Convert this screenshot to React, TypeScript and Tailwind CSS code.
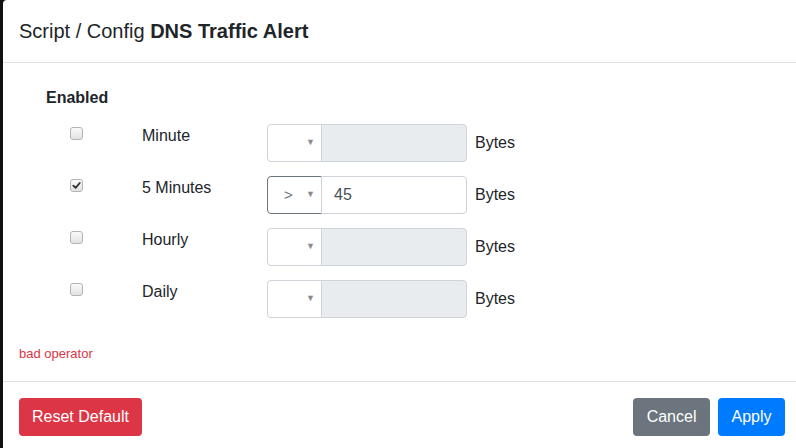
import React from 'react'

type Row = {
  label: string
  checked: boolean
  op: string
  value: string
}

const rows: Row[] = [
  { label: 'Minute', checked: false, op: '', value: '' },
  { label: '5 Minutes', checked: true, op: '>', value: '45' },
  { label: 'Hourly', checked: false, op: '', value: '' },
  { label: 'Daily', checked: false, op: '', value: '' },
]

function Checkbox({ checked }: { checked: boolean }) {
  return (
    <span className="mt-[3px] flex h-[13px] w-[13px] items-center justify-center rounded-[3px] border border-[#b4b4b4] bg-gradient-to-b from-[#fafafa] to-[#e2e2e2]">
      {checked && (
        <svg width="9" height="9" viewBox="0 0 10 10">
          <path d="M1.5 5.2 L4 7.7 L8.6 2.2" fill="none" stroke="#333" strokeWidth="2" strokeLinecap="round" strokeLinejoin="round" />
        </svg>
      )}
    </span>
  )
}

function AlertRow({ row }: { row: Row }) {
  const active = row.checked
  return (
    <div className="flex h-[38px] items-start pl-[27px]">
      <div className="w-[96px] pl-[24px]">
        <Checkbox checked={row.checked} />
      </div>
      <div className="w-[125px] text-[16px] leading-[24px] text-[#212529]">{row.label}</div>
      <div className="flex h-[38px] w-[200px]">
        <div
          className={`flex h-[38px] w-[55px] items-center rounded-l-[4px] border ${
            active ? 'border-[#6c757d]' : 'border-[#ced4da]'
          } bg-white pl-[16px] pr-[6px]`}
        >
          <span className="flex-1 text-[15px] text-[#6c757d]">{row.op}</span>
          <span className="text-[9px] text-[#8a8a8a]">▼</span>
        </div>
        <div
          className={`-ml-px flex h-[38px] flex-1 items-center rounded-r-[4px] border border-[#ced4da] pl-[12px] text-[16px] text-[#495057] ${
            active ? 'bg-white' : 'bg-[#e9ecef]'
          }`}
        >
          {row.value}
        </div>
      </div>
      <div className="ml-2 flex h-[38px] items-center text-[16px] text-[#212529]">Bytes</div>
    </div>
  )
}

export default function App() {
  return (
    <div className="flex h-[448px] w-[796px] bg-[#111111]" style={{ fontFamily: '"Liberation Sans", Arial, sans-serif' }}>
      <div className="ml-[3px] flex flex-1 flex-col rounded-tl-[4px] bg-white">
        <div className="flex h-[63px] items-center border-b border-[#dee2e6] px-4">
          <h5 className="text-[20px] leading-[30px] text-[#212529]">
            Script / Config <b>DNS Traffic Alert</b>
          </h5>
        </div>

        <div className="flex h-[318px] flex-col px-4 pt-[23px]">
          <div className="pl-[27px] text-[16px] font-bold leading-[24px] text-[#212529]">Enabled</div>
          <div className="mt-[14px] flex flex-col gap-[14px]">
            {rows.map((r) => (
              <AlertRow key={r.label} row={r} />
            ))}
          </div>
          <div className="mt-[26px] text-[13px] leading-[20px] text-[#dc3545]">bad operator</div>
        </div>

        <div className="flex flex-1 items-start border-t border-[#dee2e6] pl-4 pr-[11px] pt-4">
          <button className="h-[38px] rounded-[4px] bg-[#dc3545] px-[13px] text-[16px] text-white">Reset Default</button>
          <div className="ml-auto flex gap-2">
            <button className="h-[38px] rounded-[4px] bg-[#6c757d] px-[13.5px] text-[16px] text-white">Cancel</button>
            <button className="h-[38px] rounded-[4px] bg-[#007bff] px-[13.5px] text-[16px] text-white">Apply</button>
          </div>
        </div>
      </div>
    </div>
  )
}
